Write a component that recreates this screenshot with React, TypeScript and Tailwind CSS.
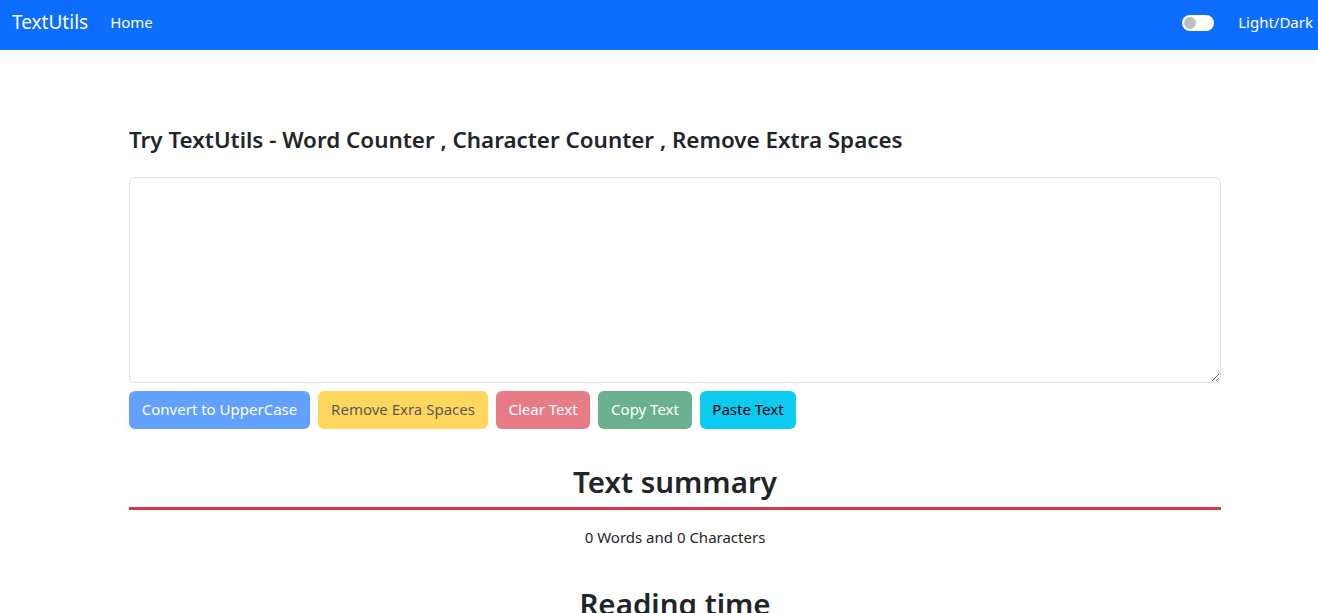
import React, { useState } from 'react';

const App = () => {
  const [text, setText] = useState('');
  const [dark, setDark] = useState(false);

  const words = text.split(/\s+/).filter((w) => w.length !== 0).length;

  return (
    <div className="min-h-screen bg-white text-[#212529] font-['Noto_Sans',sans-serif]">
      <nav className="h-[50px] bg-[#0d6efd] flex items-center px-3 pb-[6px] text-white">
        <a className="text-[19px] mr-[22px] leading-none">TextUtils</a>
        <a className="text-[15px] text-white">Home</a>
        <div className="ml-auto flex items-center">
          <button
            onClick={() => setDark(!dark)}
            className="w-8 h-4 rounded-full bg-white flex items-center px-[2px] mt-[1px]"
          >
            <span className="w-3 h-3 rounded-full bg-[#bfbfbf]" />
          </button>
          <span className="ml-6 text-[15px] -mr-[7px]">Light/Dark</span>
        </div>
      </nav>

      <div className="ml-[129px] w-[1092px] pt-[73px]">
        <h4 className="text-[22.4px] font-semibold mb-[20px]">
          Try TextUtils - Word Counter , Character Counter , Remove Extra Spaces
        </h4>
        <textarea
          value={text}
          onChange={(e) => setText(e.target.value)}
          className="block w-full h-[206px] border border-[#dee2e6] rounded-md px-3 py-2 outline-none"
        />
        <div className="flex gap-2 mt-2 text-[15px]">
          <button className="h-[38px] w-[181px] rounded-md bg-[#62a1fd] text-white">Convert to UpperCase</button>
          <button className="h-[38px] w-[170px] rounded-md bg-[#ffd75e] text-[#595959]">Remove Exra Spaces</button>
          <button className="h-[38px] w-[94px] rounded-md bg-[#e87c86] text-white">Clear Text</button>
          <button className="h-[38px] w-[94px] rounded-md bg-[#69b190] text-white">Copy Text</button>
          <button className="h-[38px] w-[96px] rounded-md bg-[#0dcaf0] text-black">Paste Text</button>
        </div>

        <h2 className="text-center text-[29.5px] font-semibold mt-[33px] leading-[40px]">Text summary</h2>
        <div className="h-[3px] bg-[#dc3545] mt-[5px]" />
        <p className="text-center text-[15px] mt-[16px]">
          {words} Words and {text.length} Characters
        </p>
        <h2 className="text-center text-[29.5px] font-semibold mt-[36px] leading-[40px]">Reading time</h2>
      </div>
    </div>
  );
};

export default App;
